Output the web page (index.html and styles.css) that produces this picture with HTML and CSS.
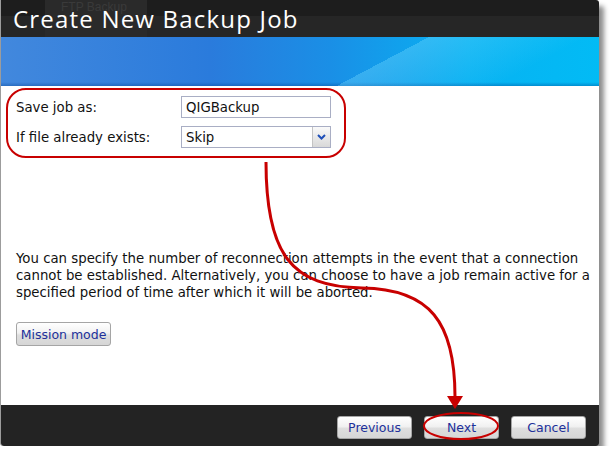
FILE: index.html
```html
<!DOCTYPE html>
<html lang="en">
<head>
    <meta charset="UTF-8">
    <title>Create New Backup Job</title>
    <link rel="stylesheet" href="styles.css">
</head>
<body>
    <div class="window">
        <div class="titlebar">
            <div class="ghost-tab">FTP Backup</div>
            <h1 class="title">Create New Backup Job</h1>
        </div>
        <div class="banner"></div>

        <div class="content">
            <div class="form-box">
                <div class="form-row">
                    <label class="form-label">Save job as:</label>
                    <div class="text-field">QIGBackup</div>
                </div>
                <div class="form-row">
                    <label class="form-label">If file already exists:</label>
                    <div class="select-field">
                        <span class="select-value">Skip</span>
                        <span class="select-btn">
                            <svg width="9" height="6" viewBox="0 0 9 6"><path d="M1 1 L4.5 4.5 L8 1" fill="none" stroke="#1f4fb8" stroke-width="2"/></svg>
                        </span>
                    </div>
                </div>
            </div>

            <p class="info-text">You can specify the number of reconnection attempts in the event that a connection cannot be established. Alternatively, you can choose to have a job remain active for a specified period of time after which it will be aborted.</p>

            <button class="btn btn-mission">Mission mode</button>
        </div>

        <div class="footer">
            <button class="btn">Previous</button>
            <button class="btn">Next</button>
            <button class="btn">Cancel</button>
        </div>

        <!-- red callout drawn over the dialog -->
        <svg class="annotation" width="615" height="464" viewBox="0 0 615 464">
            <path d="M266,162 C266,255 292,287 362,288 C430,289 455,322 455,397" fill="none" stroke="#c80000" stroke-width="3"/>
            <polygon points="447,396 463,396 455,409" fill="#c80000"/>
            <ellipse cx="461" cy="426" rx="37" ry="13" fill="none" stroke="#c80000" stroke-width="2"/>
        </svg>
    </div>
</body>
</html>
```

FILE: styles.css
```css
body, html {
    margin: 0;
    padding: 0;
    background: #fff;
    font-family: "DejaVu Sans", Verdana, sans-serif;
    font-size: 13.3px;
    color: #111;
}

.window {
    position: relative;
    width: 598px;
    border-left: 1px solid #9c9c9c;
    border-radius: 0 3px 3px 3px;
    box-shadow: 5px 6px 5px rgba(0, 0, 0, 0.45);
}

.titlebar {
    position: relative;
    height: 37px;
    background: linear-gradient(#1d1d1d 0, #1d1d1d 16px, #262626 16px, #262626 100%);
    border-radius: 0 3px 0 0;
}

.ghost-tab {
    position: absolute;
    left: 44px;
    top: 0;
    width: 102px;
    height: 37px;
    background: #2a2a2a;
    color: #3a3a3a;
    font-family: "Liberation Sans", sans-serif;
    font-size: 12px;
    line-height: 15px;
    text-indent: 16px;
}

.title {
    position: relative;
    margin: 0;
    padding: 2px 0 0 12px;
    font-family: "Open Sans", sans-serif;
    font-weight: 400;
    font-size: 24px;
    letter-spacing: 1.2px;
    color: #fff;
}

.banner {
    height: 49px;
    background:
        linear-gradient(152deg, rgba(255,255,255,0) 62%, rgba(120,220,255,0.35) 62%, rgba(120,220,255,0) 85%),
        linear-gradient(180deg, rgba(0,0,0,0) 92%, rgba(0,60,140,0.35) 100%),
        linear-gradient(90deg, #4288dd 0%, #2a7bdc 35%, #1a8fe6 55%, #08b2f2 78%, #02bbf5 100%);
}

.content {
    height: 319px;
    box-sizing: border-box;
    padding: 2px 0 0 5px;
    background: #fff;
}

.form-box {
    width: 340px;
    box-sizing: border-box;
    border: 2px solid #c80000;
    border-radius: 20px;
    padding: 6px 0 8px 8px;
    display: flex;
    flex-direction: column;
    gap: 8px;
}

.form-row {
    display: flex;
    align-items: center;
    height: 22px;
}

.form-label {
    width: 165px;
}

.text-field,
.select-field {
    width: 150px;
    height: 22px;
    box-sizing: border-box;
    border: 1px solid #a9aec4;
    background: #fff;
    display: flex;
    align-items: center;
    padding-left: 4px;
}

.select-field {
    padding-left: 0;
}

.select-value {
    flex: 1;
    padding-left: 4px;
}

.select-btn {
    width: 17px;
    height: 20px;
    border-left: 1px solid #c4c4c4;
    background: linear-gradient(#fafafa, #d8d8d8);
    display: flex;
    align-items: center;
    justify-content: center;
}

.info-text {
    margin: 92px 0 0 10px;
    width: 585px;
    line-height: 17px;
}

.btn {
    height: 23px;
    width: 75px;
    padding: 0;
    border: 1px solid #a5a5a5;
    border-radius: 3px;
    background: linear-gradient(#ffffff 0%, #f1f1f1 45%, #dedede 55%, #d6d6d6 100%);
    font-family: "DejaVu Sans", Verdana, sans-serif;
    font-size: 12.5px;
    color: #20309a;
}

.btn-mission {
    margin: 21px 0 0 10px;
    width: 95px;
    height: 24px;
}

.footer {
    height: 41px;
    box-sizing: border-box;
    background: #232323;
    border-radius: 0 0 3px 3px;
    display: flex;
    justify-content: flex-end;
    gap: 12px;
    padding: 11px 13px 0 0;
}

.annotation {
    position: absolute;
    left: -1px;
    top: 0;
    pointer-events: none;
}
```
